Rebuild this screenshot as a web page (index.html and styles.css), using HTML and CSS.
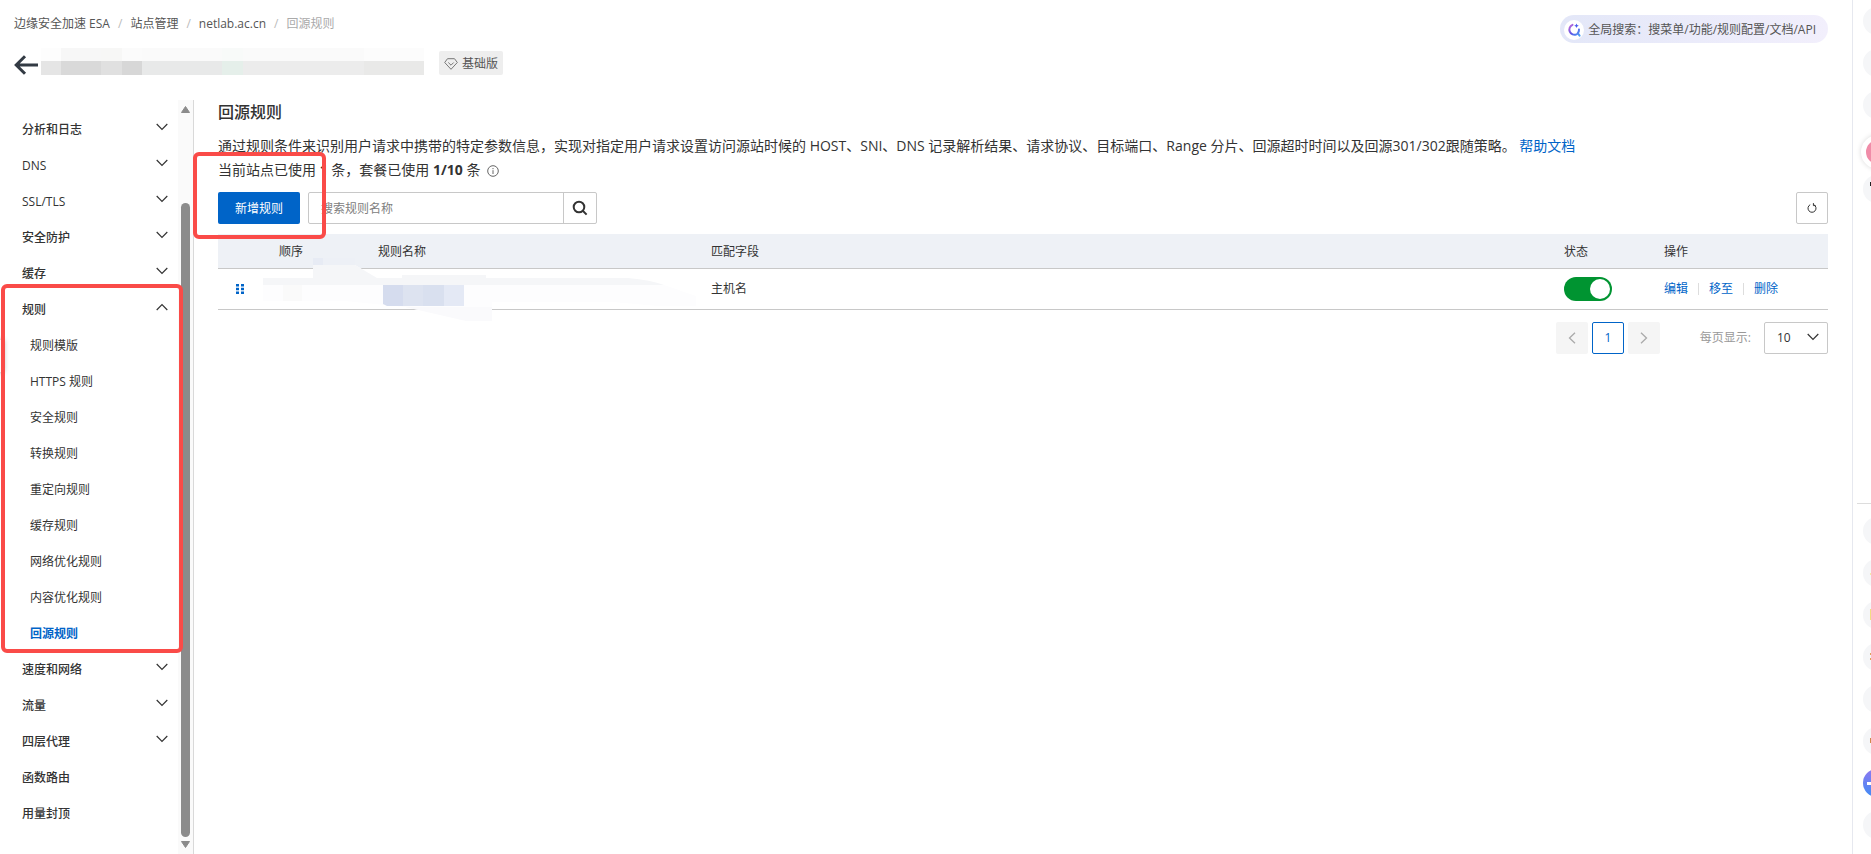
FILE: index.html
```html
<!DOCTYPE html>
<html lang="zh-CN">

<head>
    <meta charset="utf-8">
    <title>回源规则</title>
    <link rel="stylesheet" href="styles.css">
</head>

<body>
    <div class="page">
        <header class="topbar">
            <nav class="breadcrumb">
                <a href="#">边缘安全加速 ESA</a><span class="sep">/</span>
                <a href="#">站点管理</a><span class="sep">/</span>
                <a href="#">netlab.ac.cn</a><span class="sep">/</span>
                <span class="current">回源规则</span>
            </nav>
            <button class="global-search" type="button">
                <span class="search-logo">
                    <svg width="14" height="14" viewBox="0 0 14 14" fill="none" stroke-linecap="round">
                        <defs>
                            <linearGradient id="logoColor" x1="0" y1="0" x2="1" y2="1">
                                <stop offset="0" stop-color="#c56bd8" />
                                <stop offset=".5" stop-color="#5a55e6" />
                                <stop offset="1" stop-color="#4aa0f5" />
                            </linearGradient>
                        </defs>
                        <path d="M5.500 1.800A5 5 0 1 0 9.500 11.300M12 6.500A5 5 0 0 1 10.800 10.200L12.600 12.600" stroke="url(#logoColor)" stroke-width="2" />
                        <path d="M9.500 .5l.7 1.600 1.600.7-1.600.7-.7 1.600-.7-1.600-1.600-.7 1.600-.7z" fill="#4a5cf0" />
                    </svg>
                </span>
                全局搜索：搜菜单/功能/规则配置/文档/API
            </button>
        </header>

        <div class="site-row">
            <a class="back" href="#" aria-label="返回">
                <svg width="24" height="20" viewBox="0 0 24 20" fill="none" stroke="#333b44" stroke-width="3">
                    <path d="M24 10H2M11 1.2L2.2 10l8.800 8.800" />
                </svg>
            </a>
            <div class="site-name">
                <i class="m1"></i><i class="m2"></i><i class="m3"></i><i class="m4"></i><i class="m5"></i><i class="m6"></i><i class="m7"></i><i class="m8"></i>
            </div>
            <span class="badge">
                <svg width="14" height="12" viewBox="0 0 14 12" fill="none" stroke="#777">
                    <path d="M3.500 .7h7L13.300 4.500 7 11.300 .7 4.500zM4.300 4.500L7 7.200l2.700-2.700" />
                </svg>
                基础版
            </span>
        </div>

        <div class="body">
            <aside class="sidebar">
                <nav class="menu">
                    <a class="item" href="#">分析和日志<svg class="chev" viewBox="0 0 12 8"><path d="M.7 1L6 6.300 11.300 1" /></svg></a>
                    <a class="item" href="#">DNS<svg class="chev" viewBox="0 0 12 8"><path d="M.7 1L6 6.300 11.300 1" /></svg></a>
                    <a class="item" href="#">SSL/TLS<svg class="chev" viewBox="0 0 12 8"><path d="M.7 1L6 6.300 11.300 1" /></svg></a>
                    <a class="item" href="#">安全防护<svg class="chev" viewBox="0 0 12 8"><path d="M.7 1L6 6.300 11.300 1" /></svg></a>
                    <a class="item" href="#">缓存<svg class="chev" viewBox="0 0 12 8"><path d="M.7 1L6 6.300 11.300 1" /></svg></a>
                    <div class="group">
                        <a class="item" href="#">规则<svg class="chev" viewBox="0 0 12 8"><path d="M.7 7L6 1.700 11.300 7" /></svg></a>
                        <a class="sub" href="#">规则模版</a>
                        <a class="sub" href="#">HTTPS 规则</a>
                        <a class="sub" href="#">安全规则</a>
                        <a class="sub" href="#">转换规则</a>
                        <a class="sub" href="#">重定向规则</a>
                        <a class="sub" href="#">缓存规则</a>
                        <a class="sub" href="#">网络优化规则</a>
                        <a class="sub" href="#">内容优化规则</a>
                        <a class="sub active" href="#">回源规则</a>
                        <span class="mark mark-menu"></span>
                    </div>
                    <a class="item" href="#">速度和网络<svg class="chev" viewBox="0 0 12 8"><path d="M.7 1L6 6.300 11.300 1" /></svg></a>
                    <a class="item" href="#">流量<svg class="chev" viewBox="0 0 12 8"><path d="M.7 1L6 6.300 11.300 1" /></svg></a>
                    <a class="item" href="#">四层代理<svg class="chev" viewBox="0 0 12 8"><path d="M.7 1L6 6.300 11.300 1" /></svg></a>
                    <a class="item" href="#">函数路由</a>
                    <a class="item" href="#">用量封顶</a>
                </nav>
                <div class="scroll">
                    <svg width="9" height="7" viewBox="0 0 9 7"><path d="M4.500 .5L8.500 6.500H.5z" fill="#8b8b8b" stroke="#8b8b8b" stroke-linejoin="round" /></svg>
                    <div class="track"><div class="thumb"></div></div>
                    <svg width="9" height="7" viewBox="0 0 9 7"><path d="M4.500 6.500L8.500 .5H.5z" fill="#8b8b8b" stroke="#8b8b8b" stroke-linejoin="round" /></svg>
                </div>
                <span class="handle"></span>
            </aside>

            <main class="content">
                <h1>回源规则</h1>
                <p class="desc">通过规则条件来识别用户请求中携带的特定参数信息，实现对指定用户请求设置访问源站时候的 HOST、SNI、DNS 记录解析结果、请求协议、目标端口、Range 分片、回源超时时间以及回源301/302跟随策略。 <a href="#">帮助文档</a></p>
                <p class="desc">当前站点已使用 <b>1</b> 条，套餐已使用 <b>1/10</b> 条
                    <svg class="info" width="12" height="12" viewBox="0 0 12 12" fill="none" stroke="#666"><circle cx="6" cy="6" r="5.300" /><path d="M6 5.200V9M6 3v1.200" /></svg>
                </p>

                <div class="toolbar">
                    <button class="btn-add" type="button">新增规则</button>
                    <div class="search">
                        <input type="text" placeholder="搜索规则名称" aria-label="搜索规则名称">
                        <button type="button" aria-label="搜索">
                            <svg width="16" height="16" viewBox="0 0 16 16" fill="none" stroke="#333" stroke-width="2"><circle cx="7" cy="7" r="5.300" /><path d="M10.800 10.800L14.600 14.600" /></svg>
                        </button>
                    </div>
                    <button class="btn-refresh" type="button" aria-label="刷新">
                        <svg width="10" height="10" viewBox="0 0 10 10" fill="none" stroke="#333"><path d="M6.800 1.700A4 4 0 1 1 3.200 1.700" /><path d="M3.600 .1V2.600H1.400" transform="matrix(-1 0 0 1 10 0)" /></svg>
                    </button>
                    <span class="mark mark-add"></span>
                </div>

                <div class="table-box">
                    <table>
                        <colgroup><col class="c-drag"><col class="c-order"><col class="c-name"><col><col class="c-state"><col class="c-ops"></colgroup>
                        <thead>
                            <tr>
                                <th></th>
                                <th>顺序</th>
                                <th>规则名称</th>
                                <th>匹配字段</th>
                                <th>状态</th>
                                <th>操作</th>
                            </tr>
                        </thead>
                        <tbody>
                            <tr>
                                <td class="drag"><svg width="10" height="10" viewBox="0 0 10 10" fill="#0064c8"><path d="M1 0h3v2.500H1zM6 0h3v2.500H6zM1 3.700h3v2.500H1zM6 3.700h3v2.500H6zM1 7.400h3v2.500H1zM6 7.400h3v2.500H6z" /></svg></td>
                                <td></td>
                                <td></td>
                                <td>主机名</td>
                                <td><input class="switch" type="checkbox" checked aria-label="状态"></td>
                                <td class="ops"><a href="#">编辑</a><a href="#">移至</a><a href="#">删除</a></td>
                            </tr>
                        </tbody>
                    </table>
                    <!-- masked rule name -->
                    <svg class="mask" width="440" height="64" viewBox="0 0 440 64">
                        <path d="M50 7H92L114 20H365L401 27 433 38V48H395L350 44H229V63L200 61 142 49 82 43H0V20H50z" fill="#fdfdfe" />
                        <path d="M50 0H92V7H50z" fill="#edf0f6" />
                        <path d="M50 0h10v7H50z" fill="#e7ebf4" />
                        <path d="M50 7H92L114 20H139V17H223V20H365Q388 22 401 27H0V20H50z" fill="#f5f6f8" />
                        <path d="M20 27h19v16H20z" fill="#fafafa" />
                        <path d="M120 27h20v21h-16l-4-2z" fill="#d5dcee" />
                        <path d="M140 27h20v21h-20z" fill="#dde3f0" />
                        <path d="M160 27h21v21h-21z" fill="#d9e0ef" />
                        <path d="M181 27h20v21h-20z" fill="#e4e9f5" />
                        <path d="M142 49H229V63H203z" fill="#fafafc" />
                    </svg>
                </div>

                <div class="pager">
                    <button class="pg" type="button" disabled aria-label="上一页"><svg width="8" height="12" viewBox="0 0 8 12"><path d="M7 .7L1.500 6 7 11.300" /></svg></button>
                    <button class="pg on" type="button">1</button>
                    <button class="pg" type="button" disabled aria-label="下一页"><svg width="8" height="12" viewBox="0 0 8 12"><path d="M1 .7L6.500 6 1 11.300" /></svg></button>
                    <label for="size">每页显示:</label>
                    <div class="size">
                        <select id="size"><option>10</option><option>20</option><option>50</option></select>
                        <svg class="chev" viewBox="0 0 12 8"><path d="M.7 1L6 6.300 11.300 1" /></svg>
                    </div>
                </div>
            </main>
        </div>
    </div>

    <aside class="rail">
        <span class="dot"></span>
        <span class="dot"></span>
        <span class="dot"></span>
        <span class="dot pink"></span>
        <span class="dot dark"></span>
        <hr>
        <span class="dot"></span>
        <span class="dot y1"></span>
        <span class="dot y2"></span>
        <span class="dot o1"></span>
        <span class="dot"></span>
        <span class="dot o2"></span>
        <span class="dot blue"></span>
        <span class="dot"></span>
    </aside>
</body>

</html>
```
FILE: styles.css
```css
* {
    box-sizing: border-box;
}

body {
    margin: 0;
    display: flex;
    height: 100vh;
    overflow: hidden;
    background: #fff;
    color: #333;
    font-family: "Open Sans", "Noto Sans CJK SC", sans-serif;
    font-size: 12px;
    line-height: 18px;
}

a {
    color: #0064c8;
    text-decoration: none;
}

button, input, select {
    font: inherit;
    color: inherit;
}

.page {
    flex: 1;
    min-width: 0;
    display: flex;
    flex-direction: column;
}

.topbar {
    display: flex;
    justify-content: space-between;
    align-items: flex-start;
    height: 47px;
    padding: 15px 24px 0 14px;
}

.breadcrumb {
    display: flex;
}

.breadcrumb a {
    color: #555;
}

.breadcrumb .sep {
    color: #bbb;
    margin: 0 8px;
}

.breadcrumb .current {
    color: #aaa;
}

.global-search {
    display: flex;
    align-items: center;
    gap: 4px;
    height: 28px;
    padding: 1px 12px 0 4px;
    border: 0;
    border-radius: 14px;
    background: linear-gradient(90deg, #e3e7f8, #f2effc);
    color: #555;
}

.search-logo {
    display: flex;
    align-items: center;
    justify-content: center;
    width: 20px;
    height: 20px;
    border-radius: 50%;
    background: #fff;
}

/* site title */
.site-row {
    display: flex;
    align-items: flex-end;
    height: 28px;
    padding-left: 14px;
}

.back {
    display: flex;
    height: 20px;
}

.site-name {
    display: flex;
    width: 383px;
    height: 27px;
    margin-left: 3px;
}

.site-name i {
    border-top: 13px solid #fafafa;
}

.site-name .m1 { flex: 1; background: #e5e5e5; border-color: #fdfdfd; }
.site-name .m2 { flex: 2; background: #d9d9d9; border-color: #f7f7f7; }
.site-name .m3 { flex: 1; background: #e0e0e0; border-color: #f7f7f6; }
.site-name .m4 { flex: 1; background: #d7d7d7; border-color: #fbfbfb; }
.site-name .m5 { flex: 4; background: #e8e9e9; }
.site-name .m6 { flex: 1; background: #e5efea; border-color: #f8faf9; }
.site-name .m7 { flex: 6; background: #ececec; }
.site-name .m8 { flex: 3; background: #e9e9e8; border-color: #fcfcfc; }

.badge {
    display: flex;
    align-items: center;
    gap: 4px;
    height: 24px;
    margin-left: 15px;
    padding: 2px 5px 0;
    border-radius: 2px;
    background: #eee;
    color: #555;
}

.body {
    flex: 1;
    display: flex;
    min-height: 0;
    margin-top: 25px;
}

/* left menu */
.sidebar {
    position: relative;
    flex: none;
    display: flex;
    width: 194px;
    border-right: 1px solid #d9d9d9;
}

.menu {
    flex: 1;
    padding-top: 12px;
}

.item, .sub {
    display: flex;
    align-items: center;
    justify-content: space-between;
    height: 36px;
    padding: 0 10px 0 22px;
    color: #333;
}

.item {
    font-weight: 500;
}

.sub {
    padding-left: 30px;
}

.sub.active {
    color: #0064c8;
    font-weight: 600;
}

.chev {
    width: 12px;
    height: 8px;
    margin-bottom: 6px;
    fill: none;
    stroke: #333;
    stroke-width: 1.2;
}

.group {
    position: relative;
}

.mark {
    position: absolute;
    border: 4px solid #fa4b48;
    border-radius: 6px;
    pointer-events: none;
    z-index: 2;
}

.mark-menu {
    top: -8px;
    bottom: -1px;
    left: 1px;
    right: -5px;
}

.scroll {
    display: flex;
    flex-direction: column;
    align-items: center;
    width: 15px;
    padding: 6px 0;
    background: #fafafa;
}

.track {
    flex: 1;
    display: flex;
    flex-direction: column;
    justify-content: flex-end;
    margin: 4px 0;
}

.thumb {
    width: 9px;
    height: 88%;
    border-radius: 5px;
    background: #8b8b8b;
}

.handle {
    position: absolute;
    top: 240px;
    left: -12px;
    width: 16px;
    height: 32px;
    background: #fff;
    box-shadow: 0 0 5px rgba(0, 0, 0, .3);
}

/* content */
.content {
    flex: 1;
    min-width: 0;
    padding: 0 24px;
}

h1 {
    margin: 0 0 10px;
    font-size: 16px;
    line-height: 24px;
    font-weight: 500;
}

.desc {
    margin: 0;
    font-size: 14px;
    line-height: 24px;
}

.info {
    margin-left: 3px;
    vertical-align: -2px;
}

.toolbar {
    position: relative;
    display: flex;
    gap: 8px;
    margin-top: 10px;
}

.btn-add {
    width: 82px;
    height: 32px;
    padding: 2px 0 0;
    border: 0;
    border-radius: 2px;
    background: #0064c8;
    color: #fff;
}

.search {
    display: flex;
    width: 289px;
    height: 32px;
    border: 1px solid #c8c8c8;
    border-radius: 2px;
}

.search input {
    flex: 1;
    min-width: 0;
    padding: 2px 12px 0;
    border: 0;
    outline: none;
    background: none;
}

.search input::placeholder {
    color: #808080;
}

.search button {
    display: flex;
    align-items: center;
    justify-content: center;
    width: 33px;
    padding: 0;
    border: 0;
    border-left: 1px solid #c8c8c8;
    background: none;
}

.btn-refresh {
    display: flex;
    align-items: center;
    justify-content: center;
    width: 32px;
    height: 32px;
    margin-left: auto;
    padding: 0;
    border: 1px solid #c8c8c8;
    border-radius: 2px;
    background: #fff;
}

.mark-add {
    top: -40px;
    left: -25px;
    width: 133px;
    height: 87px;
}

.table-box {
    position: relative;
    margin-top: 10px;
}

table {
    width: 100%;
    table-layout: fixed;
    border-spacing: 0;
}

.c-drag { width: 45px; }
.c-order { width: 99px; }
.c-name { width: 333px; }
.c-state { width: 100px; }
.c-ops { width: 180px; }

th, td {
    height: 35px;
    padding: 2px 16px 0;
    border-bottom: 1px solid #c8c8c8;
    text-align: left;
    font-weight: 400;
}

th {
    background: #eef1f6;
}

td {
    height: 41px;
    padding-top: 0;
}

.drag svg {
    display: block;
    margin-left: 1px;
}

.ops a + a {
    margin-left: 10px;
    padding-left: 10px;
    border-left: 1px solid #ddd;
    line-height: 12px;
}

.ops a {
    display: inline-block;
}

.switch {
    display: block;
    appearance: none;
    width: 48px;
    height: 24px;
    margin: 0;
    padding: 2px;
    border-radius: 12px;
    background: #bbb;
}

.switch::before {
    content: "";
    display: block;
    width: 20px;
    height: 20px;
    border-radius: 50%;
    background: #fff;
}

.switch:checked {
    background: #009431;
}

.switch:checked::before {
    margin-left: auto;
}

.mask {
    position: absolute;
    top: 24px;
    left: 45px;
}

.pager {
    display: flex;
    justify-content: flex-end;
    align-items: center;
    gap: 4px;
    margin-top: 12px;
}

.pg {
    display: flex;
    align-items: center;
    justify-content: center;
    width: 32px;
    height: 32px;
    padding: 0;
    border: 0;
    border-radius: 2px;
    background: #f5f5f5;
}

.pg svg {
    fill: none;
    stroke: #aaa;
    stroke-width: 1.3;
}

.pg.on {
    border: 1px solid #0064c8;
    background: #fff;
    color: #0064c8;
    font-weight: 500;
}

.pager label {
    margin: 0 9px 0 36px;
    color: #999;
}

.size {
    display: flex;
    align-items: center;
    width: 64px;
    height: 32px;
    padding-right: 8px;
    border: 1px solid #c8c8c8;
    border-radius: 2px;
}

.size select {
    flex: 1;
    min-width: 0;
    padding: 0 0 0 12px;
    appearance: none;
    border: 0;
    outline: none;
    background: none;
}

.size .chev {
    margin-bottom: 2px;
}

/* app strip, cut off by the window edge */
.rail {
    flex: none;
    display: flex;
    flex-direction: column;
    gap: 14px;
    width: 19px;
    padding: 7px 0 0 10px;
    border-left: 1px solid #e6e8ef;
    overflow: hidden;
}

.dot {
    flex: none;
    width: 28px;
    height: 28px;
    border-radius: 50%;
    background: #f5f6f8;
}

.dot.pink {
    width: 34px;
    height: 34px;
    margin: 2px 0 -8px -2px;
    background: #f08ca8;
    border: 5px solid #fff;
    box-shadow: 0 0 5px rgba(0, 0, 0, .15);
}

.dot.dark { background: linear-gradient(#222, #222) 7px 7px / 5px 4px no-repeat #f5f6f8; }
.dot.y1 { background: linear-gradient(#f5e9a8, #f5e9a8) 7px 14px / 5px 2px no-repeat #f5f6f8; }
.dot.y2 { background: linear-gradient(#f3dd83, #f3dd83) 7px 8px / 5px 11px no-repeat #f5f6f8; }
.dot.o1 { background: linear-gradient(#e0a05c 2px, #f5f6f8 2px 5px, #e0a05c 5px) 7px 10px / 5px 7px no-repeat #f5f6f8; }
.dot.o2 { background: linear-gradient(#d08a4c, #d08a4c) 7px 11px / 5px 5px no-repeat #f5f6f8; }
.dot.blue { background: linear-gradient(#fff, #fff) 4px 13px / 8px 3px no-repeat, linear-gradient(#8f78f0, #3f8cf5); }

.rail hr {
    flex: none;
    width: 20px;
    height: 1px;
    margin: 286px 0 -1px -6px;
    border: 0;
    background: #ddd;
}
```
